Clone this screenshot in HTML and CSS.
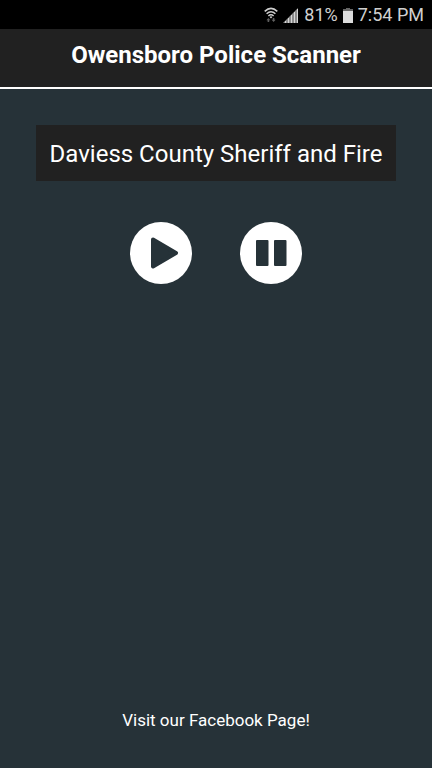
FILE: index.html
```html
<!DOCTYPE html>
<html lang="en">
<head>
<meta charset="utf-8">
<meta name="viewport" content="width=device-width, initial-scale=1">
<title>Owensboro Police Scanner</title>
<link rel="stylesheet" href="styles.css">
</head>
<body>
<div class="status-bar">
  <svg class="wifi" viewBox="0 0 14 16" aria-hidden="true">
    <g fill="none" stroke="#cfcfcf" stroke-width="1.5">
      <path d="M0.7 4.4Q7-1.6 13.3 4.4"/>
      <path d="M2.6 6.8Q7 2.6 11.4 6.8"/>
      <path d="M4.4 9Q7 6.6 9.6 9"/>
    </g>
    <path fill="#cfcfcf" d="M5.6 9.9Q7 8.7 8.4 9.9L7 11.4z"/>
    <path fill="#606060" d="M4.4 11l2 2.2H5.2V15H3.6v-1.8H2.4zM9.6 15l-2-2.2h1.2V11h1.6v1.8h1.2z"/>
  </svg>
  <svg class="signal" viewBox="0 0 16 16" aria-hidden="true">
    <path fill="#8c8c8c" d="M0 16L15 1v15z"/>
    <path fill="#d6d6d6" d="M2 14h1v2H2zM5 11h1v5H5zM8 8h1v8H8zM11 5h1v11h-1zM14 2h1v14h-1z"/>
  </svg>
  <span class="percent">81%</span>
  <svg class="battery" viewBox="0 0 10 15" aria-hidden="true">
    <path fill="#666" d="M3 0h4v1h3v2H0V1h3z"/>
    <path fill="#dcdcdc" d="M0 3h10v12H0z"/>
  </svg>
  <time class="clock">7:54 PM</time>
</div>
<header class="app-header">
  <h1>Owensboro Police Scanner</h1>
</header>
<main class="player">
  <h2 class="channel">Daviess County Sheriff and Fire</h2>
  <div class="controls">
    <button class="control" type="button" aria-label="Play">
      <svg viewBox="0 0 62 62" aria-hidden="true">
        <path d="M23 17.5L46 31L23 44.5z" fill="#263238" stroke="#263238" stroke-width="4" stroke-linejoin="round"/>
      </svg>
    </button>
    <button class="control" type="button" aria-label="Pause">
      <svg viewBox="0 0 62 62" aria-hidden="true">
        <path d="M17 19h10.500v24H17zM35 19h10.500v24H35z" fill="#263238" stroke="#263238" stroke-width="2" stroke-linejoin="round"/>
      </svg>
    </button>
  </div>
</main>
<footer class="footer">
  <a href="#facebook">Visit our Facebook Page!</a>
</footer>
</body>
</html>
```

FILE: styles.css
```css
* {
  box-sizing: border-box;
}

body {
  display: flex;
  flex-direction: column;
  min-height: 100vh;
  margin: 0;
  background: #263238;
  color: #fff;
  font-family: Roboto, "Liberation Sans", sans-serif;
}

svg {
  display: block;
}

.status-bar {
  display: flex;
  align-items: center;
  justify-content: flex-end;
  gap: 5px;
  padding: 3px 8px 2px;
  background: #000;
  color: #d0d0d0;
  font-size: 18px;
  line-height: 24px;
}

.wifi {
  width: 14px;
  height: 16px;
}

.signal {
  width: 16px;
  height: 16px;
}

.battery {
  width: 10px;
  height: 15px;
}

.app-header {
  padding: 10px 16px 16px;
  border-bottom: 2px solid #fff;
  background: #212121;
  text-align: center;
}

h1 {
  margin: 0;
  font-size: 24px;
  font-weight: 700;
  line-height: 32px;
}

.player {
  flex: 1;
  padding: 36px;
}

.channel {
  margin: 0;
  padding: 13px 8px 11px;
  background: #212121;
  font-size: 24px;
  font-weight: 400;
  line-height: 32px;
  text-align: center;
}

.controls {
  display: flex;
  justify-content: center;
  gap: 48px;
  padding-top: 41px;
}

.control {
  width: 62px;
  height: 62px;
  padding: 0;
  border: 0;
  border-radius: 50%;
  background: #fff;
  cursor: pointer;
}

.footer {
  padding: 0 16px 36px;
  font-size: 17px;
  line-height: 24px;
  text-align: center;
}

.footer a {
  color: #fff;
  text-decoration: none;
}
```
